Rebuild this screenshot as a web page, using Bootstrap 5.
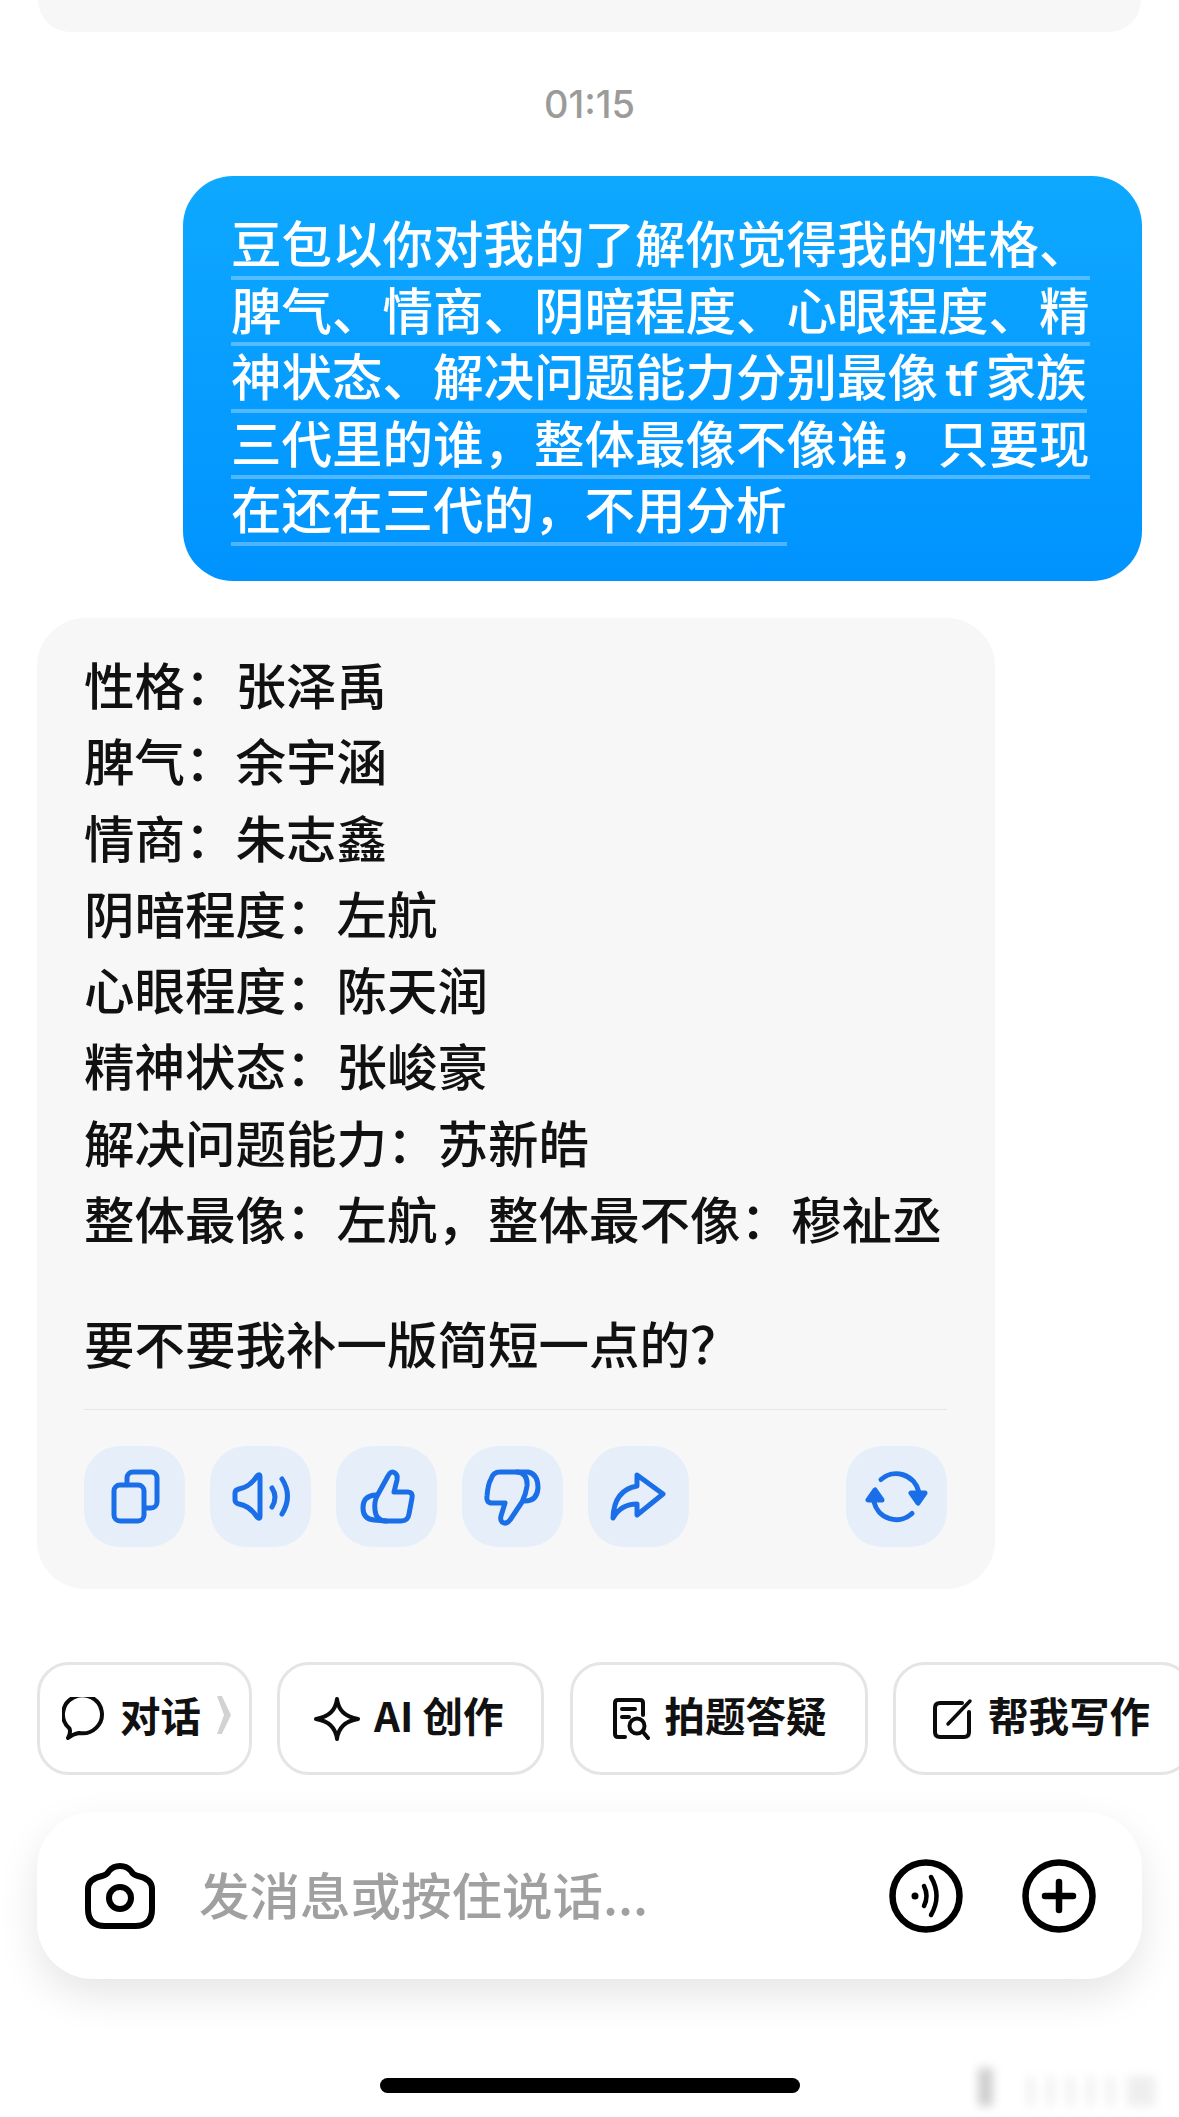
<!DOCTYPE html>
<html lang="zh">
<head>
    <meta charset="utf-8">
    <title>对话</title>
    <link href="https://cdn.jsdelivr.net/npm/bootstrap@5.3.0/dist/css/bootstrap.min.css" rel="stylesheet">
    <style>
        html, body { margin: 0; height: 2117px; overflow: hidden; background: #fff; }
        body { width: 1179px; position: relative; font-family: "Noto Sans CJK SC", "Liberation Sans", sans-serif; font-weight: 500; color: #111; }
        .prev-tail { height: 32px; margin: 0 38px 0 38px; background: #f7f7f7; border-radius: 0 0 44px 44px; }
        .time-label { height: 40px; margin-top: 52px; text-align: center; font: 500 38px/40px Inter, sans-serif; color: #9b9b9b; }
        .user-bubble { margin: 52px 37px 0 183px; height: 405px; padding: 37px 0 0 48px; border-radius: 50px; color: #fff; font-size: 50.5px; background: linear-gradient(180deg, #0ea8ff 0%, #0093ff 100%); }
        .user-line { display: block; width: fit-content; height: 66.5px; line-height: 56px; white-space: nowrap; border-bottom: 4px solid rgba(255, 255, 255, .3); }
        .user-line b { font: 600 46px Inter, sans-serif; margin: 0 -4px; }
        .answer-box { margin: 37px 184px 0 37px; height: 971px; padding: 27px 48px 0 47px; background: #f7f7f7; border-radius: 48px; font-size: 50.5px; }
        .answer-line { height: 76.3px; line-height: 76.3px; white-space: nowrap; }
        .answer-ask { margin-top: 49px; }
        .answer-rule { height: 1px; margin-top: 28px; background: #e6e6e6; }
        .act-row { margin-top: 36px; }
        .act-btn { width: 101px; height: 101px; flex: none; border-radius: 36px; background: #e6eff9; }
        .act-btn svg { display: block; fill: none; stroke: #1a6fe8; stroke-width: 5; stroke-linecap: round; stroke-linejoin: round; }
        .act-btn + .act-btn { margin-left: 25px; }
        .act-btn.act-last { margin-left: auto; }
        .chip-row { margin: 73px 0 0 37px; gap: 25.5px; }
        .quick-chip { height: 113px; flex: none; border: 3px solid #e5e5e5; border-radius: 32px; font-size: 40.5px; font-weight: 700; white-space: nowrap; }
        .quick-chip svg { display: block; flex: none; fill: none; stroke: #0b0b0b; stroke-linecap: round; stroke-linejoin: round; }
        .quick-chip span { margin-top: -7px; }
        .chip-a { width: 214.500px; padding-left: 22px; }
        .chip-b { width: 267px; padding-left: 34px; }
        .chip-c { width: 298px; padding-left: 40px; }
        .chip-d { width: 300px; padding-left: 36px; }
        .chip-text { margin-left: 14px; }
        .chip-gt { width: 14px; height: 38px; margin-left: 16px; background: #d2d2d2; clip-path: polygon(0 0, 35% 0, 100% 50%, 35% 100%, 0 100%, 50% 50%); }
        .ask-bar { margin: 37px 37px 0 37px; height: 167px; padding: 0 46px 0 48px; background: #fff; border-radius: 56px; box-shadow: 0 16px 40px rgba(0, 0, 0, .1); }
        .ask-bar svg { display: block; flex: none; fill: none; stroke: #000; stroke-linecap: round; stroke-linejoin: round; }
        .ask-hint { margin-left: 44px; font-size: 50.5px; color: #a0a0a0; white-space: nowrap; margin-top: -4px; }
        .ask-plus { margin-left: 59px; }
        .home-pill { width: 420px; height: 15px; margin: 99px auto 0; background: #000; border-radius: 8px; }
        .stamp { position: absolute; left: 978px; top: 2068px; width: 195px; height: 38px; filter: blur(5px); }
        .stamp i { display: block; height: 30px; width: 7px; margin-right: 13px; background: #efefef; }
        .stamp i.stamp-dark { width: 15px; height: 38px; margin-right: 34px; background: #cfcfcf; }
        .stamp i.stamp-wide { width: 28px; margin: 0; background: #eeeeee; }
    </style>
</head>
<body>
    <div class="prev-tail"></div>
    <div class="time-label">01:15</div>

    <div class="user-bubble">
        <span class="user-line">豆包以你对我的了解你觉得我的性格、</span>
        <span class="user-line">脾气、情商、阴暗程度、心眼程度、精</span>
        <span class="user-line">神状态、解决问题能力分别最像 <b>tf</b> 家族</span>
        <span class="user-line">三代里的谁，整体最像不像谁，只要现</span>
        <span class="user-line">在还在三代的，不用分析</span>
    </div>

    <div class="answer-box">
        <div class="answer-line">性格：张泽禹</div>
        <div class="answer-line">脾气：余宇涵</div>
        <div class="answer-line">情商：朱志鑫</div>
        <div class="answer-line">阴暗程度：左航</div>
        <div class="answer-line">心眼程度：陈天润</div>
        <div class="answer-line">精神状态：张峻豪</div>
        <div class="answer-line">解决问题能力：苏新皓</div>
        <div class="answer-line">整体最像：左航，整体最不像：穆祉丞</div>
        <div class="answer-line answer-ask">要不要我补一版简短一点的？</div>
        <div class="answer-rule"></div>
        <div class="act-row d-flex">
            <div class="act-btn"><svg width="101" height="101" viewBox="0 0 101 101"><rect x="30" y="39" width="30" height="36" rx="6"/><path d="M43 38V32a6 6 0 0 1 6-6H67a6 6 0 0 1 6 6V56a6 6 0 0 1-6 6H61"/></svg></div>
            <div class="act-btn"><svg width="101" height="101" viewBox="0 0 101 101"><path d="M25 47Q25 44 29 43Q40 41 47 30Q50 27 50 31V70Q50 74 47 71Q40 60 29 58Q25 57 25 54Z"/><path d="M62 42Q68 51 62 61"/><path d="M72 33Q83 50 72 68"/></svg></div>
            <div class="act-btn"><svg width="101" height="101" viewBox="0 0 101 101"><path d="M41 50L52 30Q55 24 59 27Q62 29 61 34L58 46H72Q77 46 76 52L73 68Q72 75 65 75H50Q40 75 39 64Q38 56 41 50Z"/><path d="M39 49Q27 50 27 62Q27 73 38 74L50 75"/></svg></div>
            <div class="act-btn"><svg width="101" height="101" viewBox="0 0 101 101"><path d="M25 50Q26 38 29 33Q31 26 38 26H55Q66 27 65 40Q64 48 60 56L48 74Q44 79 40 76Q38 74 39 70L43 57H30Q24 57 25 50Z"/><path d="M55 26H66Q76 28 76 42Q75 55 63 55"/></svg></div>
            <div class="act-btn"><svg width="101" height="101" viewBox="0 0 101 101"><path d="M49 29L75 48L49 69V58Q33 58 25 72Q26 44 49 40Z"/></svg></div>
            <div class="act-btn act-last"><svg width="101" height="101" viewBox="0 0 101 101"><path d="M35 33.500A23 23 0 0 1 72.500 45"/><path d="M65 47H79L72 57Z" fill="#1a6fe8"/><path d="M66 67.500A23 23 0 0 1 28 56"/><path d="M22 54H36L29 44Z" fill="#1a6fe8"/></svg></div>
        </div>
    </div>

    <div class="chip-row d-flex">
        <div class="quick-chip chip-a d-flex align-items-center">
            <svg width="44" height="44" viewBox="0 0 44 44" stroke-width="4"><path d="M6 41Q9 36 7.500 31.500A19.500 19 0 1 1 17 36Q11 37 6 41Z"/></svg>
            <span class="chip-text">对话</span><span class="chip-gt"></span>
        </div>
        <div class="quick-chip chip-b d-flex align-items-center">
            <svg width="46" height="44" viewBox="0 0 46 44" stroke-width="4"><path d="M23 2Q25 19 44 22Q25 25 23 42Q21 25 2 22Q21 19 23 2Z"/></svg>
            <span class="chip-text">AI 创作</span>
        </div>
        <div class="quick-chip chip-c d-flex align-items-center">
            <svg width="38" height="42" viewBox="0 0 38 42" stroke-width="4"><path d="M12 39H5Q2 39 2 36V5Q2 2 5 2H27Q30 2 30 5V17"/><path d="M9 11H22M9 19H16"/><circle cx="24" cy="28" r="7.500"/><path d="M30 34L35 40"/></svg>
            <span class="chip-text">拍题答疑</span>
        </div>
        <div class="quick-chip chip-d d-flex align-items-center">
            <svg width="42" height="42" viewBox="0 0 42 42" stroke-width="4"><path d="M30 5H8Q3 5 3 10V34Q3 39 8 39H32Q37 39 37 34V14"/><path d="M16 26L38 3" stroke-width="3.500"/></svg>
            <span class="chip-text">帮我写作</span>
        </div>
    </div>

    <div class="ask-bar d-flex align-items-center">
        <svg width="70" height="66" viewBox="0 0 70 66" stroke-width="6"><path d="M24 8Q28 3 35 3Q42 3 46 8Q48 12 53 13Q67 16 67 26V46Q67 63 50 63H20Q3 63 3 46V26Q3 16 17 13Q22 12 24 8Z"/><circle cx="35" cy="35" r="11"/></svg>
        <span class="ask-hint">发消息或按住说话...</span>
        <svg class="ms-auto" width="74" height="74" viewBox="0 0 74 74" stroke-width="6.500"><circle cx="37" cy="37" r="33.500"/><circle cx="26" cy="37" r="2.500" fill="#000" stroke-width="2"/><path d="M35 27Q40 37 35 47" stroke-width="4.500"/><path d="M42 18Q53 37 42 56" stroke-width="4.500"/></svg>
        <svg class="ask-plus" width="74" height="74" viewBox="0 0 74 74" stroke-width="6.500"><circle cx="37" cy="37" r="33.500"/><path d="M37 23V51M23 37H51"/></svg>
    </div>

    <div class="home-pill"></div>

    <div class="stamp d-flex align-items-end">
        <i class="stamp-dark"></i><i></i><i></i><i></i><i></i><i></i><i class="stamp-wide"></i>
    </div>

    <script src="https://cdn.jsdelivr.net/npm/bootstrap@5.3.0/dist/js/bootstrap.bundle.min.js"></script>
</body>
</html>
